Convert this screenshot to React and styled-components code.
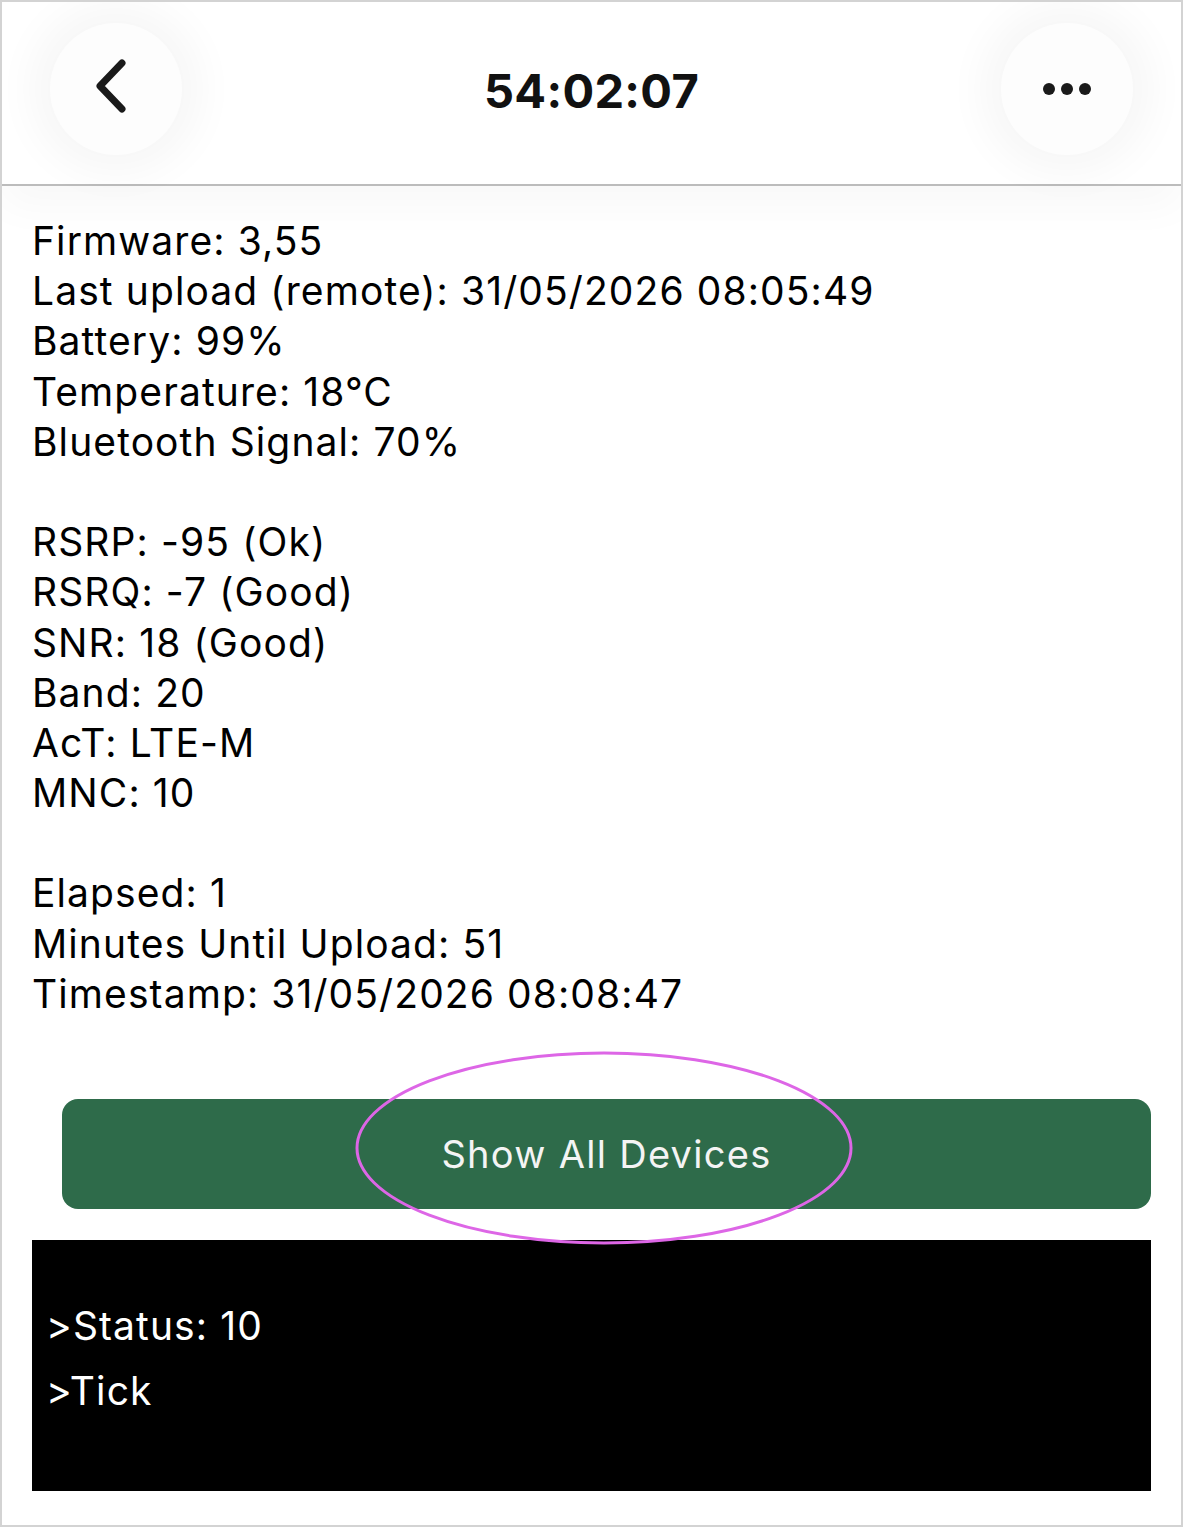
import React from "react";
import styled, { createGlobalStyle } from "styled-components";

const Global = createGlobalStyle`
  html, body { margin: 0; padding: 0; background: #fff; }
  body { font-family: Inter, "Noto Sans", "Liberation Sans", sans-serif; }
  * { box-sizing: border-box; }
`;

const Frame = styled.div`
  position: relative;
  width: 1183px;
  height: 1527px;
  border: 2px solid #d3d3d3;
  background: #fff;
  overflow: hidden;
`;

const Header = styled.header`
  height: 184px;
  border-bottom: 2px solid #bcbcbc;
  display: flex;
  align-items: center;
  justify-content: space-between;
  padding: 0 48px 8px 48px;
  box-shadow: 0 20px 40px rgba(0, 0, 0, 0.03);
`;

const RoundButton = styled.button`
  width: 132px;
  height: 132px;
  border-radius: 50%;
  border: none;
  background: #fdfdfd;
  box-shadow: 0 0 40px 20px rgba(0, 0, 0, 0.035);
  display: flex;
  align-items: center;
  justify-content: center;
  padding: 0;
`;

const Title = styled.h1`
  margin: 2px 0 0;
  font-size: 47px;
  font-weight: 700;
  color: #111;
  letter-spacing: 0.3px;
`;

const Content = styled.main`
  padding: 30px 30px 0 30px;
`;

const InfoBlock = styled.div`
  font-size: 39px;
  line-height: 50.2px;
  letter-spacing: 1.1px;
  color: #000;
  font-weight: 400;
`;

const Line = styled.div`
  height: 50.2px;
  white-space: pre;
`;

const ActionButton = styled.button`
  display: flex;
  align-items: center;
  justify-content: center;
  margin: 80px 0 0 30px;
  width: calc(100% - 30px);
  height: 110px;
  border: none;
  border-radius: 16px;
  background: #2e6b4a;
  color: #f4f4f4;
  font-family: inherit;
  font-size: 38px;
  letter-spacing: 1.3px;
`;

const Log = styled.div`
  margin-top: 31px;
  height: 251px;
  background: #000;
  color: #fff;
  padding: 53px 14px 0;
  font-size: 39px;
  line-height: 65px;
  letter-spacing: 1.1px;
`;

const Highlight = styled.svg`
  position: absolute;
  left: 350px;
  top: 1048px;
  pointer-events: none;
`;

const groups = [
  [
    "Firmware: 3,55",
    "Last upload (remote): 31/05/2026 08:05:49",
    "Battery: 99%",
    "Temperature: 18°C",
    "Bluetooth Signal: 70%",
  ],
  [
    "RSRP: -95 (Ok)",
    "RSRQ: -7 (Good)",
    "SNR: 18 (Good)",
    "Band: 20",
    "AcT: LTE-M",
    "MNC: 10",
  ],
  [
    "Elapsed: 1",
    "Minutes Until Upload: 51",
    "Timestamp: 31/05/2026 08:08:47",
  ],
];

export default function App() {
  return (
    <>
      <Global />
      <Frame>
        <Header>
          <RoundButton aria-label="Back">
            <svg width="40" height="64" viewBox="0 0 40 64">
              <path
                d="M26 6 L4 29 L26 52"
                fill="none"
                stroke="#1a1a1a"
                strokeWidth="7"
                strokeLinecap="round"
                strokeLinejoin="round"
              />
            </svg>
          </RoundButton>
          <Title>54:02:07</Title>
          <RoundButton aria-label="More">
            <svg width="52" height="16" viewBox="0 0 52 16">
              <circle cx="8" cy="8" r="6" fill="#1a1a1a" />
              <circle cx="26" cy="8" r="6" fill="#1a1a1a" />
              <circle cx="44" cy="8" r="6" fill="#1a1a1a" />
            </svg>
          </RoundButton>
        </Header>
        <Content>
          <InfoBlock>
            {groups.map((g, gi) => (
              <React.Fragment key={gi}>
                {gi > 0 && <Line> </Line>}
                {g.map((t) => (
                  <Line key={t}>{t}</Line>
                ))}
              </React.Fragment>
            ))}
          </InfoBlock>
          <ActionButton>Show All Devices</ActionButton>
          <Log>
            <div>&gt;Status: 10</div>
            <div>&gt;Tick</div>
          </Log>
        </Content>
        <Highlight width="504" height="196" viewBox="0 0 504 196">
          <ellipse
            cx="252"
            cy="98"
            rx="247"
            ry="95"
            fill="none"
            stroke="#dd66e6"
            strokeWidth="3"
          />
        </Highlight>
      </Frame>
    </>
  );
}
